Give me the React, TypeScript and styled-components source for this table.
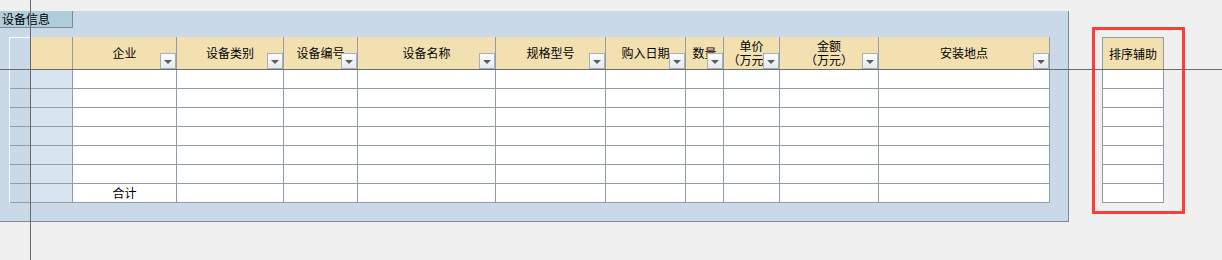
import React from "react";
import styled, { createGlobalStyle } from "styled-components";

type Column = {
  key: string;
  label: string[];
  width: number;
};

const columns: Column[] = [
  { key: "company", label: ["企业"], width: 104 },
  { key: "category", label: ["设备类别"], width: 107 },
  { key: "code", label: ["设备编号"], width: 74 },
  { key: "name", label: ["设备名称"], width: 138 },
  { key: "spec", label: ["规格型号"], width: 110 },
  { key: "date", label: ["购入日期"], width: 80 },
  { key: "qty", label: ["数量"], width: 38 },
  { key: "price", label: ["单价", "（万元）"], width: 56 },
  { key: "amount", label: ["金额", "（万元）"], width: 99 },
  { key: "site", label: ["安装地点"], width: 171 },
];

const ROW_COUNT = 7;

const App: React.FC = () => {
  const rows = Array.from({ length: ROW_COUNT }, (_, i) => i);

  return (
    <>
      <GlobalStyle />
      <Page>
        <Panel>
          <Tab>设备信息</Tab>
          <Grid $cols={[21, 42, ...columns.map((c) => c.width)]}>
            <HeaderCell $kind="selector" />
            <HeaderCell $kind="lead" />
            {columns.map((col) => (
              <HeaderCell key={col.key} $kind="field">
                <Label>
                  {col.label.map((line) => (
                    <LabelLine key={line}>{line}</LabelLine>
                  ))}
                </Label>
                <FilterButton />
              </HeaderCell>
            ))}
            {rows.map((r) => (
              <React.Fragment key={r}>
                <Cell $kind="selector" />
                <Cell $kind="lead" />
                {columns.map((col, i) => (
                  <Cell key={col.key} $kind="field">
                    {r === ROW_COUNT - 1 && i === 0 ? "合计" : ""}
                  </Cell>
                ))}
              </React.Fragment>
            ))}
          </Grid>
        </Panel>
        <Highlight>
          <SortTable>
            <SortHeader>排序辅助</SortHeader>
            {rows.map((r) => (
              <SortCell key={r} />
            ))}
          </SortTable>
        </Highlight>
      </Page>
    </>
  );
};

export default App;

const GlobalStyle = createGlobalStyle`
  html, body {
    margin: 0;
    padding: 0;
    background: #f0f0f0;
  }
  body {
    font-family: "Noto Sans CJK SC", "Microsoft YaHei", sans-serif;
    font-size: 12px;
    color: #000;
  }
`;

// frozen pane split lines run across the whole sheet
const Page = styled.div`
  position: relative;
  width: 1222px;
  height: 260px;
  overflow: hidden;
  display: flex;
  align-items: flex-start;

  &::before {
    content: "";
    position: absolute;
    left: 30px;
    top: 0;
    bottom: 0;
    width: 1px;
    background: #6b6b6b;
    z-index: 5;
  }
  &::after {
    content: "";
    position: absolute;
    left: 0;
    right: 0;
    top: 69px;
    height: 1px;
    background: #6b6b6b;
    z-index: 5;
  }
`;

const Panel = styled.section`
  box-sizing: border-box;
  margin-top: 11px;
  width: 1069px;
  height: 211px;
  background: #c9d9e8;
  border-right: 1px solid #7d8a96;
  border-bottom: 1px solid #7d8a96;
`;

const Tab = styled.div`
  box-sizing: border-box;
  width: 73px;
  height: 17px;
  padding-left: 2px;
  line-height: 16px;
  background: #b0cddb;
  border-right: 1px solid #7d8a96;
  border-bottom: 1px solid #7d8a96;
  white-space: nowrap;
`;

const Grid = styled.div<{ $cols: number[] }>`
  display: grid;
  grid-template-columns: ${({ $cols }) => $cols.map((w) => `${w}px`).join(" ")};
  grid-auto-rows: 19px;
  grid-template-rows: 33px;
  width: max-content;
  margin: 9px 0 0 9px;
  border-left: 1px solid #ffffff;
`;

type Kind = "selector" | "lead" | "field";

const headerBg: Record<Kind, string> = {
  selector: "#c9d9e8",
  lead: "#f3e0b1",
  field: "#f3e0b1",
};

const bodyBg: Record<Kind, string> = {
  selector: "#c9d9e8",
  lead: "#d9e4f1",
  field: "#ffffff",
};

const HeaderCell = styled.div<{ $kind: Kind }>`
  position: relative;
  box-sizing: border-box;
  display: flex;
  align-items: center;
  justify-content: center;
  text-align: center;
  white-space: nowrap;
  overflow: hidden;
  background: ${({ $kind }) => headerBg[$kind]};
  border-right: 1px solid #909ca8;
  border-bottom: 1px solid #909ca8;
  border-top: ${({ $kind }) => ($kind === "selector" ? "1px solid #ffffff" : "none")};
`;

const Label = styled.div`
  display: flex;
  flex-direction: column;
  align-items: center;
`;

const LabelLine = styled.div`
  height: 14px;
  line-height: 14px;
  overflow: visible;
`;

const FilterButton = styled.span`
  position: absolute;
  right: 0;
  bottom: 0;
  box-sizing: border-box;
  width: 16px;
  height: 16px;
  border: 1px solid #a7b0ba;
  background: linear-gradient(#fdfdfd, #e6e9ed);

  &::after {
    content: "";
    position: absolute;
    left: 3px;
    top: 6px;
    border-left: 4px solid transparent;
    border-right: 4px solid transparent;
    border-top: 4px solid #5c5c5c;
  }
`;

const Cell = styled.div<{ $kind: Kind }>`
  box-sizing: border-box;
  display: flex;
  align-items: center;
  justify-content: center;
  line-height: 14px;
  background: ${({ $kind }) => bodyBg[$kind]};
  border-right: 1px solid #909ca8;
  border-bottom: 1px solid #909ca8;
`;

const Highlight = styled.div`
  box-sizing: border-box;
  margin: 27px 0 0 23px;
  width: 93px;
  height: 187px;
  padding: 7px 0 0 7px;
  border: 3px solid #ff3b3b;
`;

const SortTable = styled.div`
  display: grid;
  grid-template-columns: 61px;
  grid-template-rows: 32px;
  grid-auto-rows: 19px;
  width: max-content;
  border-left: 1px solid #909ca8;
  border-top: 1px solid #909ca8;
`;

const SortHeader = styled.div`
  box-sizing: border-box;
  display: flex;
  align-items: center;
  justify-content: center;
  white-space: nowrap;
  background: #f3e0b1;
  border-right: 1px solid #909ca8;
  border-bottom: 1px solid #909ca8;
`;

const SortCell = styled.div`
  box-sizing: border-box;
  background: #ffffff;
  border-right: 1px solid #909ca8;
  border-bottom: 1px solid #909ca8;
`;
